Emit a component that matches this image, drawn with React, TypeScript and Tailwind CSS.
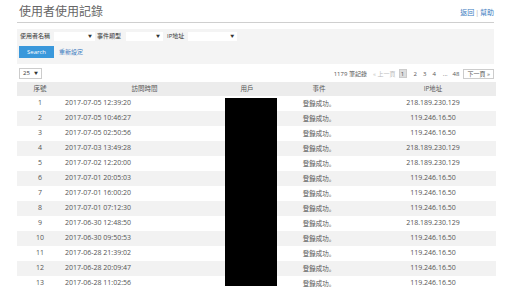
import React from "react";

const rows = [
  ["1", "2017-07-05 12:39:20", "218.189.230.129"],
  ["2", "2017-07-05 10:46:27", "119.246.16.50"],
  ["3", "2017-07-05 02:50:56", "119.246.16.50"],
  ["4", "2017-07-03 13:49:28", "218.189.230.129"],
  ["5", "2017-07-02 12:20:00", "218.189.230.129"],
  ["6", "2017-07-01 20:05:03", "119.246.16.50"],
  ["7", "2017-07-01 16:00:20", "119.246.16.50"],
  ["8", "2017-07-01 07:12:30", "119.246.16.50"],
  ["9", "2017-06-30 12:48:50", "218.189.230.129"],
  ["10", "2017-06-30 09:50:53", "119.246.16.50"],
  ["11", "2017-06-28 21:39:02", "119.246.16.50"],
  ["12", "2017-06-28 20:09:47", "119.246.16.50"],
  ["13", "2017-06-28 11:02:56", "119.246.16.50"],
];

function Select({ w }: { w: string }) {
  return (
    <div className={`${w} h-[9px] bg-white flex items-center justify-end pr-[3px]`}>
      <span className="text-[4px] leading-none text-[#333]">▼</span>
    </div>
  );
}

export default function App() {
  return (
    <div
      className="relative w-[511px] h-[288px] overflow-hidden bg-white text-[#555]"
      style={{ fontFamily: '"Open Sans", "Noto Sans CJK TC", sans-serif' }}
    >
      {/* title */}
      <div className="mx-[17px] pt-[4px] pb-[3px] flex justify-between items-end border-b border-[#cfcfcf]">
        <h1 className="px-[2px] text-[12px] leading-[15px] text-[#666]">使用者使用記錄</h1>
        <div className="text-[7px] leading-[9px] text-[#3b7bc0] mb-[2px]">
          返回<span className="text-[#aaa] mx-[1px]">|</span>幫助
        </div>
      </div>

      {/* filters */}
      <div className="mx-[17px] mt-[6px] bg-[#f4f4f4] pt-[3px] pb-[6px] px-[2px]">
        <div className="flex items-center text-[6px] leading-[9px] text-[#333]">
          <span className="ml-[1px]">使用者名稱</span>
          <div className="ml-[4px]"><Select w="w-[41px]" /></div>
          <span className="ml-[2px]">事件類型</span>
          <div className="ml-[5px]"><Select w="w-[37px]" /></div>
          <span className="ml-[4px]">IP地址</span>
          <div className="ml-[4px]"><Select w="w-[49px]" /></div>
        </div>
        <div className="flex items-center mt-[5px]">
          <button className="w-[35px] h-[12px] bg-[#3a98db] text-white text-[6px] leading-none">Search</button>
          <span className="ml-[5px] text-[6px] text-[#3b7bc0]">重新設定</span>
        </div>
      </div>

      {/* pager */}
      <div className="mx-[17px] mt-[4px] flex items-center justify-between">
        <div className="ml-[2px] w-[23px] h-[11px] border border-[#ccc] flex items-center justify-between px-[3px] text-[6px] text-[#333]">
          <span>25</span>
          <span className="text-[4px]">▼</span>
        </div>
        <div className="flex items-center text-[6px] leading-none text-[#555]">
          <span>1179 筆記錄</span>
          <span className="ml-[6px] text-[#bbb]">« 上一頁</span>
          <span className="ml-[3px] w-[8px] h-[9px] bg-[#ddd] border border-[#ccc] flex items-center justify-center">1</span>
          <span className="ml-[7px]">2</span>
          <span className="ml-[6px]">3</span>
          <span className="ml-[6px]">4</span>
          <span className="ml-[7px]">...</span>
          <span className="ml-[5px]">48</span>
          <span className="ml-[4px] h-[10px] px-[3px] border border-[#ccc] flex items-center">下一頁 »</span>
        </div>
      </div>

      {/* table */}
      <div className="mx-[17px] mt-[3px] w-[479px]">
        <div className="flex h-[14px] items-center bg-[#ececec] text-[6.5px] text-[#555]">
          <div className="w-[46px] text-center">序號</div>
          <div className="w-[163px] text-center">訪問時間</div>
          <div className="w-[42px] text-center">用戶</div>
          <div className="w-[102px] text-center">事件</div>
          <div className="flex-1 text-center">IP地址</div>
        </div>
        {rows.map(([n, t, ip], i) => (
          <div
            key={n}
            className={`flex h-[15px] items-center text-[7px] text-[#555] ${i % 2 === 1 ? "bg-[#f2f2f2]" : "bg-white"}`}
          >
            <div className="w-[46px] text-center">{n}</div>
            <div className="w-[163px] pl-[2px]">{t}</div>
            <div className="w-[42px]" />
            <div
              className="w-[102px] text-center text-[6.5px]"
              style={{ fontFamily: '"Noto Sans CJK JP", sans-serif' }}
            >
              登錄成功。
            </div>
            <div className="flex-1 text-center">{ip}</div>
          </div>
        ))}
      </div>

      {/* redaction */}
      <div className="absolute left-[225px] top-[98px] w-[52px] h-[188px] bg-black" />
    </div>
  );
}
